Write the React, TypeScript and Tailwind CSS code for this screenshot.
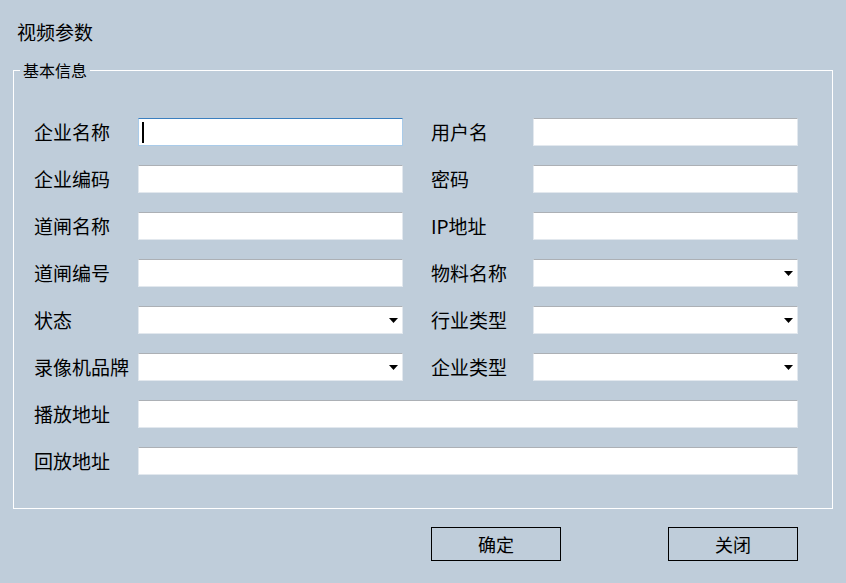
import React from 'react';

type Field = { label: string; select?: boolean; focused?: boolean };

const rows: [Field, Field][] = [
  [{ label: '企业名称', focused: true }, { label: '用户名' }],
  [{ label: '企业编码' }, { label: '密码' }],
  [{ label: '道闸名称' }, { label: 'IP地址' }],
  [{ label: '道闸编号' }, { label: '物料名称', select: true }],
  [{ label: '状态', select: true }, { label: '行业类型', select: true }],
  [{ label: '录像机品牌', select: true }, { label: '企业类型', select: true }],
];

const wideRows = ['播放地址', '回放地址'];

function Box({ select, focused }: { select?: boolean; focused?: boolean }) {
  return (
    <div
      className={`h-[28px] bg-white flex items-center justify-end border ${
        focused
          ? 'border-[#a9cbe9] border-t-[#3b7fbf]'
          : 'border-[#e2e8ee] border-t-[#acb0b5]'
      }`}
    >
      {focused && <span className="mr-auto ml-[3px] w-[2px] h-[21px] bg-black" />}
      {select && (
        <svg width="9" height="5" viewBox="0 0 9 5" className="mr-[4px]">
          <path d="M0 0h9L4.5 5z" fill="#000" />
        </svg>
      )}
    </div>
  );
}

export default function App() {
  return (
    <div
      className="w-[846px] h-[583px] bg-[#bfcdda] text-black"
      style={{ fontFamily: '"Noto Sans CJK SC", "Noto Sans", sans-serif' }}
    >
      <div className="pl-[17px] pt-[19px] h-[59px] text-[19px] leading-[26px]">视频参数</div>

      <fieldset className="ml-[13px] w-[820px] h-[450px] border border-white">
        <legend className="ml-[6px] px-[3px] text-[16px] leading-[22px]">基本信息</legend>
        <div className="pl-[20px] pt-[37px] grid grid-cols-[104px_265px_28px_102px_265px] gap-y-[19px] items-center">
          {rows.map(([a, b]) => (
            <React.Fragment key={a.label}>
              <div className="text-[19px] leading-[28px]">{a.label}</div>
              <Box select={a.select} focused={a.focused} />
              <div />
              <div className="text-[19px] leading-[28px]">{b.label}</div>
              <Box select={b.select} />
            </React.Fragment>
          ))}
          {wideRows.map((l) => (
            <React.Fragment key={l}>
              <div className="text-[19px] leading-[28px]">{l}</div>
              <div className="col-span-4">
                <Box />
              </div>
            </React.Fragment>
          ))}
        </div>
      </fieldset>

      <div className="flex pl-[431px] pt-[18px] gap-[107px]">
        <button className="w-[130px] h-[34px] border border-black text-[18px]">确定</button>
        <button className="w-[130px] h-[34px] border border-black text-[18px]">关闭</button>
      </div>
    </div>
  );
}
